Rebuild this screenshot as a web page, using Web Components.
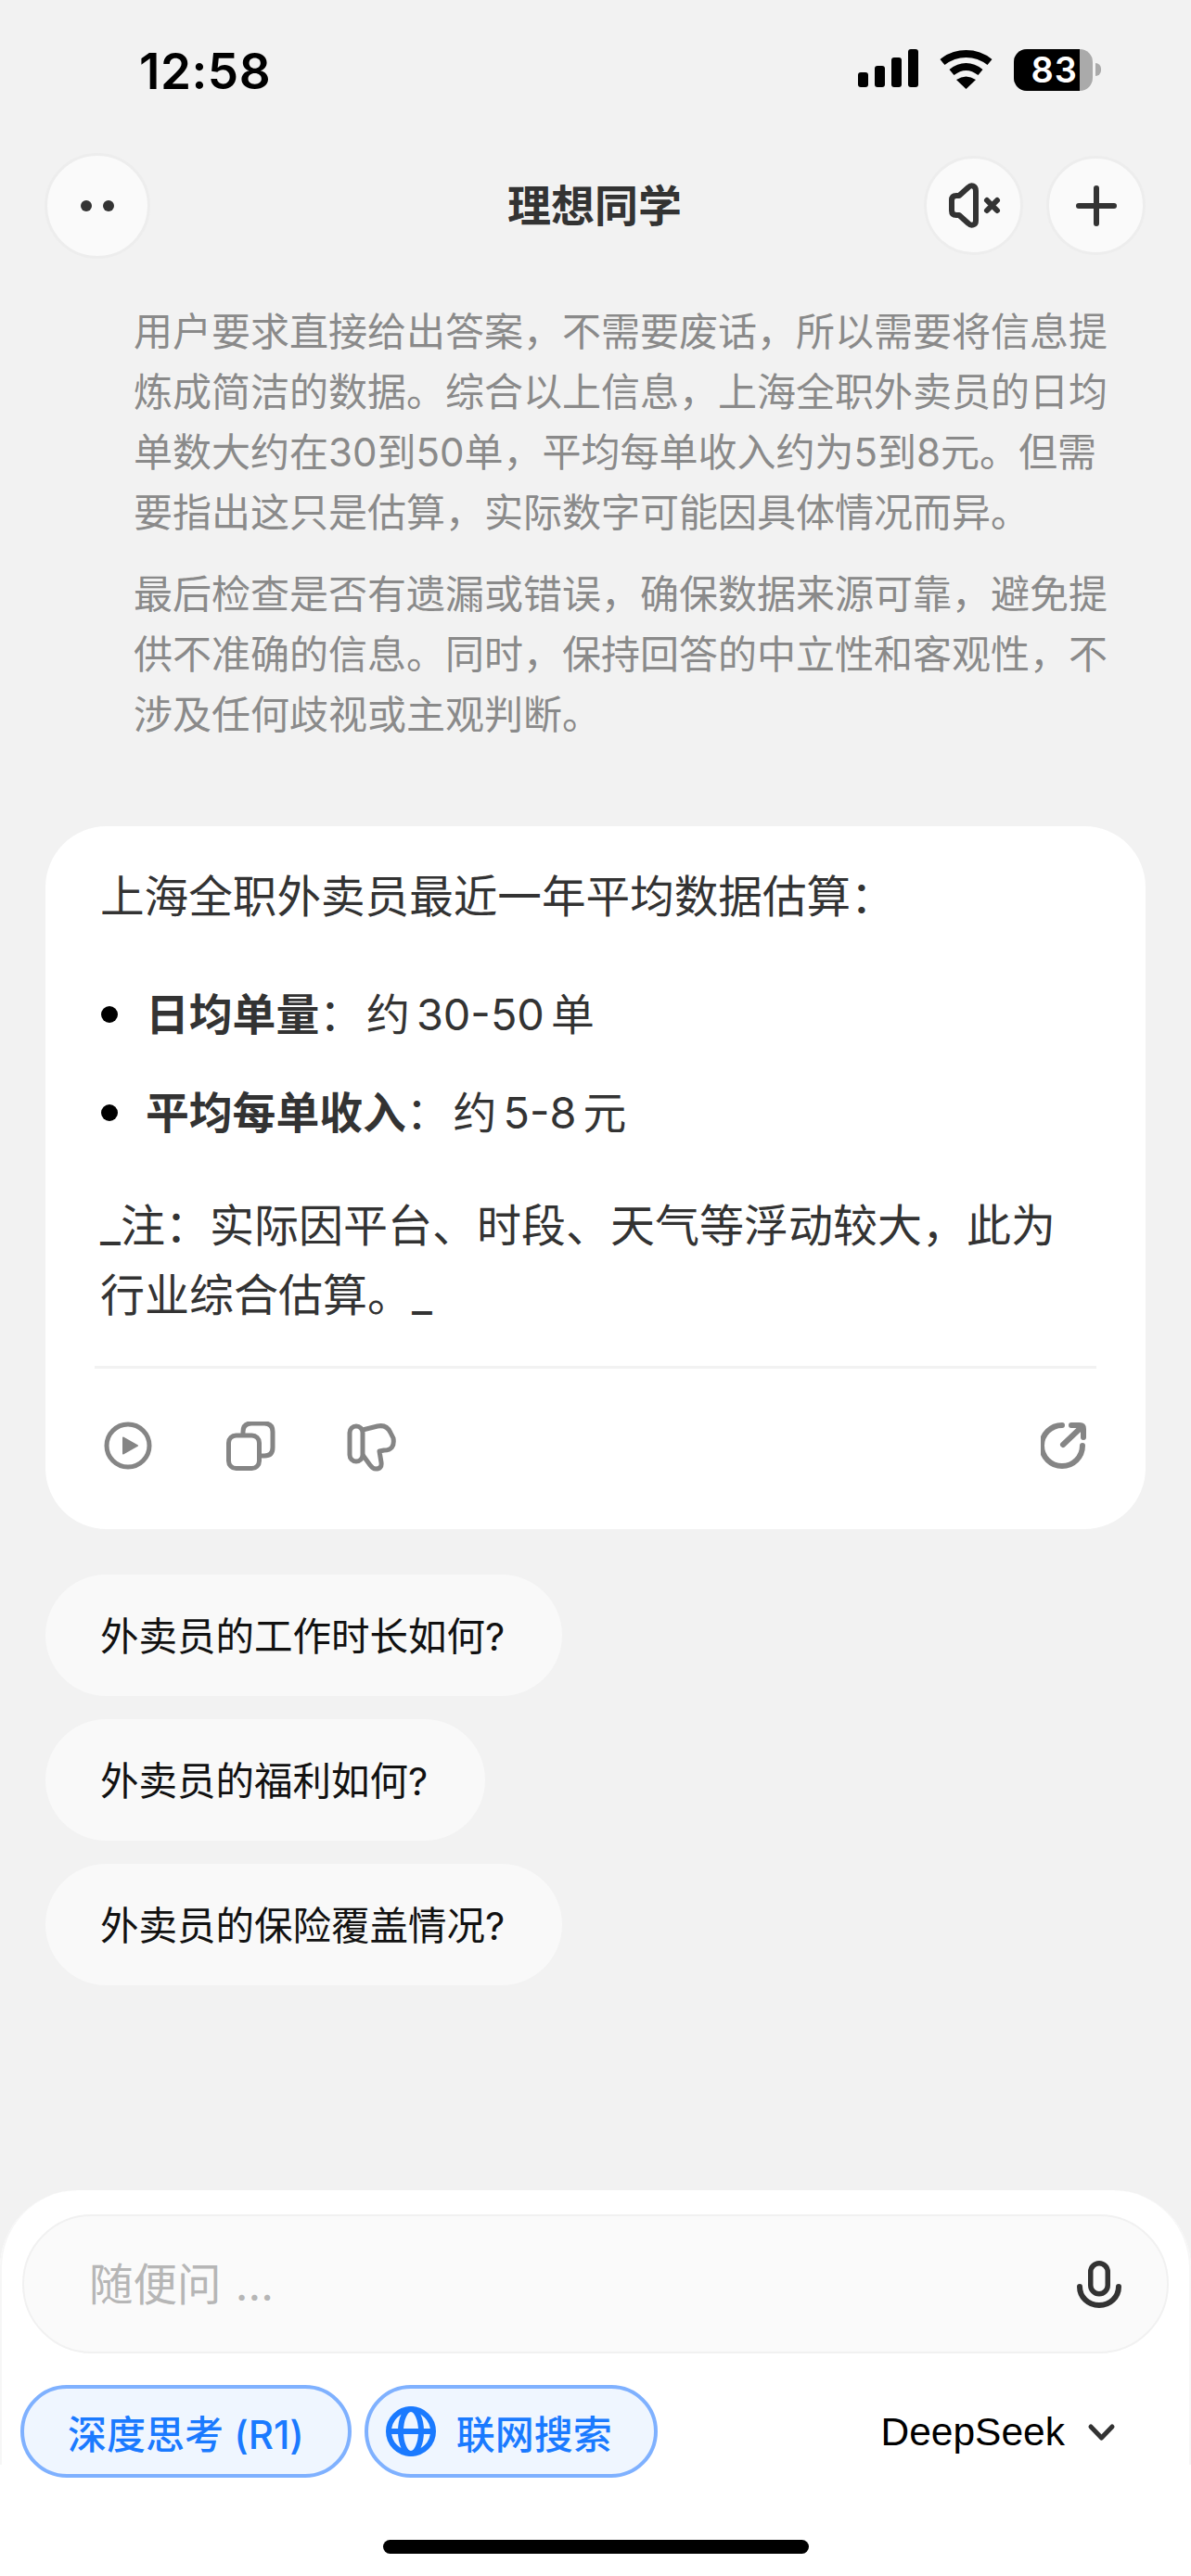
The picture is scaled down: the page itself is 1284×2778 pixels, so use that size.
<!DOCTYPE html>
<html lang="zh">
<head>
<meta charset="utf-8">
<title>理想同学</title>
<style>
  html, body { margin: 0; padding: 0; background: #f2f2f2; }
  body {
    width: 1284px;
    height: 2778px;
    overflow: hidden;
    font-family: Inter, "Noto Sans CJK SC", sans-serif;
    display: flex;
    flex-direction: column;
  }
</style>
</head>
<body>
  <status-bar time="12:58" battery="83"></status-bar>

  <chat-header title="理想同学">
    <round-button slot="left" size="114">
      <svg width="36" height="12" viewBox="0 0 36 12"><circle cx="6" cy="6" r="6" fill="#333"/><circle cx="30" cy="6" r="6" fill="#333"/></svg>
    </round-button>
    <round-button slot="right" size="107">
      <svg width="60" height="54" viewBox="1020 195 60 54" fill="none" stroke="#333" stroke-width="6" stroke-linecap="round" stroke-linejoin="round">
        <path d="M1052 206C1052 200 1047 199 1044 202L1034 211H1031Q1026 211 1026 216V227Q1026 232 1031 232H1034L1044 241C1047 244 1052 243 1052 238Z"/>
        <path d="M1064 216L1075 227M1075 216L1064 227"/>
      </svg>
    </round-button>
    <round-button slot="right" size="107">
      <svg width="44" height="44" viewBox="0 0 44 44" stroke="#333" stroke-width="6" stroke-linecap="round"><path d="M22 3V41M3 22H41"/></svg>
    </round-button>
  </chat-header>

  <thinking-block>
    <p>用户要求直接给出答案，不需要废话，所以需要将信息提炼成简洁的数据。综合以上信息，上海全职外卖员的日均单数大约在30到50单，平均每单收入约为5到8元。但需要指出这只是估算，实际数字可能因具体情况而异。</p>
    <p>最后检查是否有遗漏或错误，确保数据来源可靠，避免提供不准确的信息。同时，保持回答的中立性和客观性，不涉及任何歧视或主观判断。</p>
  </thinking-block>

  <answer-card>
    <span slot="lead">上海全职外卖员最近一年平均数据估算：</span>
    <answer-bullet label="日均单量" value="约 30-50 单"></answer-bullet>
    <answer-bullet label="平均每单收入" value="约 5-8 元"></answer-bullet>
    <span slot="note">_注：实际因平台、时段、天气等浮动较大，此为行业综合估算。_</span>
  </answer-card>

  <suggest-list>
    <suggest-chip>外卖员的工作时长如何?</suggest-chip>
    <suggest-chip>外卖员的福利如何?</suggest-chip>
    <suggest-chip>外卖员的保险覆盖情况?</suggest-chip>
  </suggest-list>

  <chat-composer placeholder="随便问 ...">
    <toggle-pill>深度思考 (R1)</toggle-pill>
    <toggle-pill globe>联网搜索</toggle-pill>
  </chat-composer>

<script>
// Barra di stato iOS
class StatusBar extends HTMLElement {
  constructor() {
    super();
    this.attachShadow({ mode: "open" });
  }
  connectedCallback() {
    const time = this.getAttribute("time");
    const battery = this.getAttribute("battery");
    this.shadowRoot.innerHTML = `
      <style>
        :host { display: flex; align-items: flex-start; height: 165px; flex: none; box-sizing: border-box; padding: 53px 97px 0 150px; }
        .time { font-size: 53px; line-height: 48px; font-weight: 600; color: #000; letter-spacing: 0.5px; flex: 1; }
        .icons { display: flex; align-items: flex-start; }
        .wifi { margin: 1px 0 0 23px; }
        .batt { position: relative; margin-left: 23px; width: 85px; height: 45px; border-radius: 14px; overflow: hidden; background: #aaa; display: flex; }
        .fill { width: 71px; background: #000; color: #fff; font-size: 38px; font-weight: 600; line-height: 45px; text-align: right; box-sizing: border-box; padding-right: 2px; letter-spacing: 1px; }
        .nub { width: 6px; height: 14px; margin: 15px 0 0 3px; background: #aaa; border-radius: 0 7px 7px 0; }
      </style>
      <div class="time">${time}</div>
      <div class="icons">
        <svg width="65" height="42" viewBox="0 0 65 42" fill="#000">
          <rect x="0" y="25" width="11" height="16" rx="3"/>
          <rect x="18" y="18" width="11" height="23" rx="3"/>
          <rect x="36" y="9" width="11" height="32" rx="3"/>
          <rect x="54" y="0" width="11" height="41" rx="3"/>
        </svg>
        <svg class="wifi" width="57" height="42" viewBox="0 0 57 42" fill="none">
          <path d="M3 13C18 1 39 1 54 13" stroke="#000" stroke-width="8"/>
          <path d="M13 24C23 16 34 16 44 24" stroke="#000" stroke-width="8"/>
          <path d="M28.5 42L18 32Q28.5 25 39 32Z" fill="#000"/>
        </svg>
        <div class="batt"><div class="fill">${battery}</div></div>
        <div class="nub"></div>
      </div>
    `;
  }
}

// Bottone circolare dell'header
class RoundButton extends HTMLElement {
  constructor() {
    super();
    this.attachShadow({ mode: "open" });
  }
  connectedCallback() {
    const size = this.getAttribute("size") || 107;
    this.shadowRoot.innerHTML = `
      <style>
        :host { display: flex; align-items: center; justify-content: center; flex: none; box-sizing: border-box; width: ${size}px; height: ${size}px; border-radius: 50%; background: #fafafa; border: 3px solid #ededed; }
      </style>
      <slot></slot>
    `;
  }
}

class ChatHeader extends HTMLElement {
  constructor() {
    super();
    this.attachShadow({ mode: "open" });
  }
  connectedCallback() {
    this.shadowRoot.innerHTML = `
      <style>
        :host { display: flex; align-items: center; flex: none; height: 113px; padding: 0 49px 0 48px; position: relative; }
        .title { position: absolute; left: -2px; right: 0; text-align: center; font-size: 47px; font-weight: 700; color: #333; line-height: 113px; }
        .right { margin-left: auto; display: flex; gap: 25px; }
      </style>
      <slot name="left"></slot>
      <div class="title">${this.getAttribute("title")}</div>
      <div class="right"><slot name="right"></slot></div>
    `;
  }
}

// Testo del ragionamento, in grigio
class ThinkingBlock extends HTMLElement {
  constructor() {
    super();
    this.attachShadow({ mode: "open" });
    this.shadowRoot.innerHTML = `
      <style>
        :host { display: block; flex: none; margin: 47px 90px 0 144px; font-size: 42px; line-height: 65px; color: #8a8a8a; }
        ::slotted(p) { margin: 0 0 23px; }
      </style>
      <slot></slot>
    `;
  }
}

class AnswerBullet extends HTMLElement {
  constructor() {
    super();
    this.attachShadow({ mode: "open" });
  }
  connectedCallback() {
    this.shadowRoot.innerHTML = `
      <style>
        :host { display: flex; align-items: center; height: 64px; color: #333; font-size: 46.8px; }
        .dot { width: 18px; height: 18px; border-radius: 50%; background: #000; margin-right: 30px; flex: none; }
        b { font-weight: 700; }
        .val { word-spacing: -6px; margin-left: 4px; }
      </style>
      <span class="dot"></span><b>${this.getAttribute("label")}</b><span>：</span><span class="val">${this.getAttribute("value")}</span>
    `;
  }
}

class AnswerCard extends HTMLElement {
  constructor() {
    super();
    this.attachShadow({ mode: "open" });
    this.shadowRoot.innerHTML = `
      <style>
        :host { display: block; flex: none; box-sizing: border-box; height: 758px; margin: 65px 49px 0; padding: 44px 53px 0 60px; background: #fff; border-radius: 66px; font-size: 48px; line-height: 64px; color: #333; }
        .lead { display: block; height: 64px; font-size: 47.6px; margin-left: -1px; }
        .list { display: flex; flex-direction: column; gap: 42px; margin-top: 63px; }
        .note { display: block; line-height: 75px; margin: 52px 0 0 -1px; }
        hr { border: 0; height: 3px; background: #f2f2f2; margin: 39px 0 0 -7px; }
        .tools { display: flex; align-items: flex-start; margin-top: 57px; }
        .tools svg { flex: none; display: block; }
        .tools .share { margin-left: auto; }
      </style>
      <slot name="lead" class="lead"></slot>
      <div class="list"><slot></slot></div>
      <slot name="note" class="note"></slot>
      <hr>
      <div class="tools">
        <svg style="margin-left:3px" width="52" height="52" viewBox="0 0 52 52" fill="none" stroke="#858585" stroke-width="5">
          <circle cx="26" cy="26" r="23"/>
          <path d="M21 17.5L36 26L21 34.5Z" fill="#858585" stroke-width="2" stroke-linejoin="round"/>
        </svg>
        <svg style="margin-left:80px" width="53" height="53" viewBox="244 1534 53 53" fill="none" stroke="#858585" stroke-width="5">
          <rect x="246.5" y="1549" width="33" height="35.5" rx="8"/>
          <path d="M262 1548V1545Q262 1536 271 1536H285Q294 1536 294 1545V1562Q294 1571 285 1571H280"/>
        </svg>
        <svg style="margin:1px 0 0 77px" width="54" height="54" viewBox="374 1535 54 54" fill="none" stroke="#858585" stroke-width="5" stroke-linejoin="round">
          <rect x="377" y="1539" width="14" height="38" rx="7"/>
          <path d="M391 1543L407 1539Q417 1537 421 1546L424 1552Q426 1565 414 1565L409 1566L411 1578Q412 1585 405 1585Q402 1585 399 1581L391 1570"/>
        </svg>
        <svg class="share" style="margin:1px 10px 0 auto" width="50" height="50" viewBox="1122 1535 50 50" fill="none" stroke="#858585" stroke-width="6" stroke-linecap="round" stroke-linejoin="round">
          <path d="M1145 1538A22 22 0 1 0 1167 1560"/>
          <path d="M1146 1559L1166 1540"/>
          <path d="M1155 1538H1164Q1168 1538 1168 1542V1551"/>
        </svg>
      </div>
    `;
  }
}

class SuggestList extends HTMLElement {
  constructor() {
    super();
    this.attachShadow({ mode: "open" });
    this.shadowRoot.innerHTML = `
      <style>
        :host { display: flex; flex-direction: column; align-items: flex-start; gap: 25px; flex: none; margin: 49px 0 0 49px; }
      </style>
      <slot></slot>
    `;
  }
}

class SuggestChip extends HTMLElement {
  constructor() {
    super();
    this.attachShadow({ mode: "open" });
    this.shadowRoot.innerHTML = `
      <style>
        :host { display: block; box-sizing: border-box; height: 131px; padding: 0 62px 0 59px; line-height: 135px; background: #f9f9f9; border-radius: 66px; font-size: 41.5px; color: #111; white-space: nowrap; }
      </style>
      <slot></slot>
    `;
  }
}

class TogglePill extends HTMLElement {
  constructor() {
    super();
    this.attachShadow({ mode: "open" });
  }
  connectedCallback() {
    const globe = this.hasAttribute("globe");
    this.shadowRoot.innerHTML = `
      <style>
        :host { display: inline-flex; align-items: center; box-sizing: border-box; height: 100px; padding: 0 ${globe ? 45 : 47}px 0 ${globe ? 19 : 47}px; gap: 22px; border: 4px solid #7fb1ff; border-radius: 50px; background: #eff6ff; color: #1a7aff; font-size: 42px; font-weight: 500; white-space: nowrap; }
        svg { flex: none; }
      </style>
      ${globe ? `<svg width="54" height="54" viewBox="0 0 54 54" fill="none" stroke="#1a7aff" stroke-width="6">
        <circle cx="27" cy="27" r="24"/><ellipse cx="27" cy="27" rx="11" ry="24"/><path d="M3 27H51"/>
      </svg>` : ""}
      <slot></slot>
    `;
  }
}

class ChatComposer extends HTMLElement {
  constructor() {
    super();
    this.attachShadow({ mode: "open" });
  }
  connectedCallback() {
    this.shadowRoot.innerHTML = `
      <style>
        :host { display: block; position: relative; flex: none; box-sizing: border-box; margin-top: auto; height: 416px; padding: 26px 24px 0; background: #fff; border-radius: 84px 84px 0 0; }
        /* filo grigio sui due lati del pannello */
        :host::before { content: ""; position: absolute; left: 0; right: 0; top: 0; height: 296px; box-sizing: border-box; border: solid #f6f6f6; border-width: 0 2px; border-radius: 84px 84px 0 0; pointer-events: none; }
        .input { position: relative; display: flex; align-items: center; justify-content: space-between; box-sizing: border-box; height: 150px; padding: 0 49px 0 70px; background: #fafafa; border: 2px solid #f1f1f1; border-radius: 75px; font-size: 47.5px; color: #b6b6b6; }
        .input span { margin-bottom: 5px; word-spacing: 2px; }
        .row { position: relative; display: flex; align-items: center; gap: 14px; margin: 34px 0 0 -2px; }
        .model { margin: 2px 56px 0 auto; display: flex; align-items: center; gap: 23px; font-size: 42.5px; color: #000; font-family: "Liberation Sans", Inter, sans-serif; }
        .home { position: absolute; left: 413px; width: 459px; top: 377px; height: 15px; border-radius: 8px; background: #000; }
      </style>
      <div class="input">
        <span>${this.getAttribute("placeholder")}</span>
        <svg width="48" height="51" viewBox="0 0 48 51" fill="none" stroke="#333" stroke-linecap="round">
          <rect x="14.750" y="2.750" width="18.500" height="33" rx="9.250" stroke-width="5.500"/>
          <path d="M3 28C3 39 12 48 24 48S45 39 45 28" stroke-width="6"/>
        </svg>
      </div>
      <div class="row">
        <slot></slot>
        <div class="model">DeepSeek
          <svg width="33" height="20" viewBox="0 0 33 20" fill="none" stroke="#333" stroke-width="5" stroke-linecap="round" stroke-linejoin="round"><path d="M5 4L16.500 16L28 4"/></svg>
        </div>
      </div>
      <div class="home"></div>
    `;
  }
}

customElements.define("status-bar", StatusBar);
customElements.define("round-button", RoundButton);
customElements.define("chat-header", ChatHeader);
customElements.define("thinking-block", ThinkingBlock);
customElements.define("answer-bullet", AnswerBullet);
customElements.define("answer-card", AnswerCard);
customElements.define("suggest-list", SuggestList);
customElements.define("suggest-chip", SuggestChip);
customElements.define("toggle-pill", TogglePill);
customElements.define("chat-composer", ChatComposer);
</script>
</body>
</html>
